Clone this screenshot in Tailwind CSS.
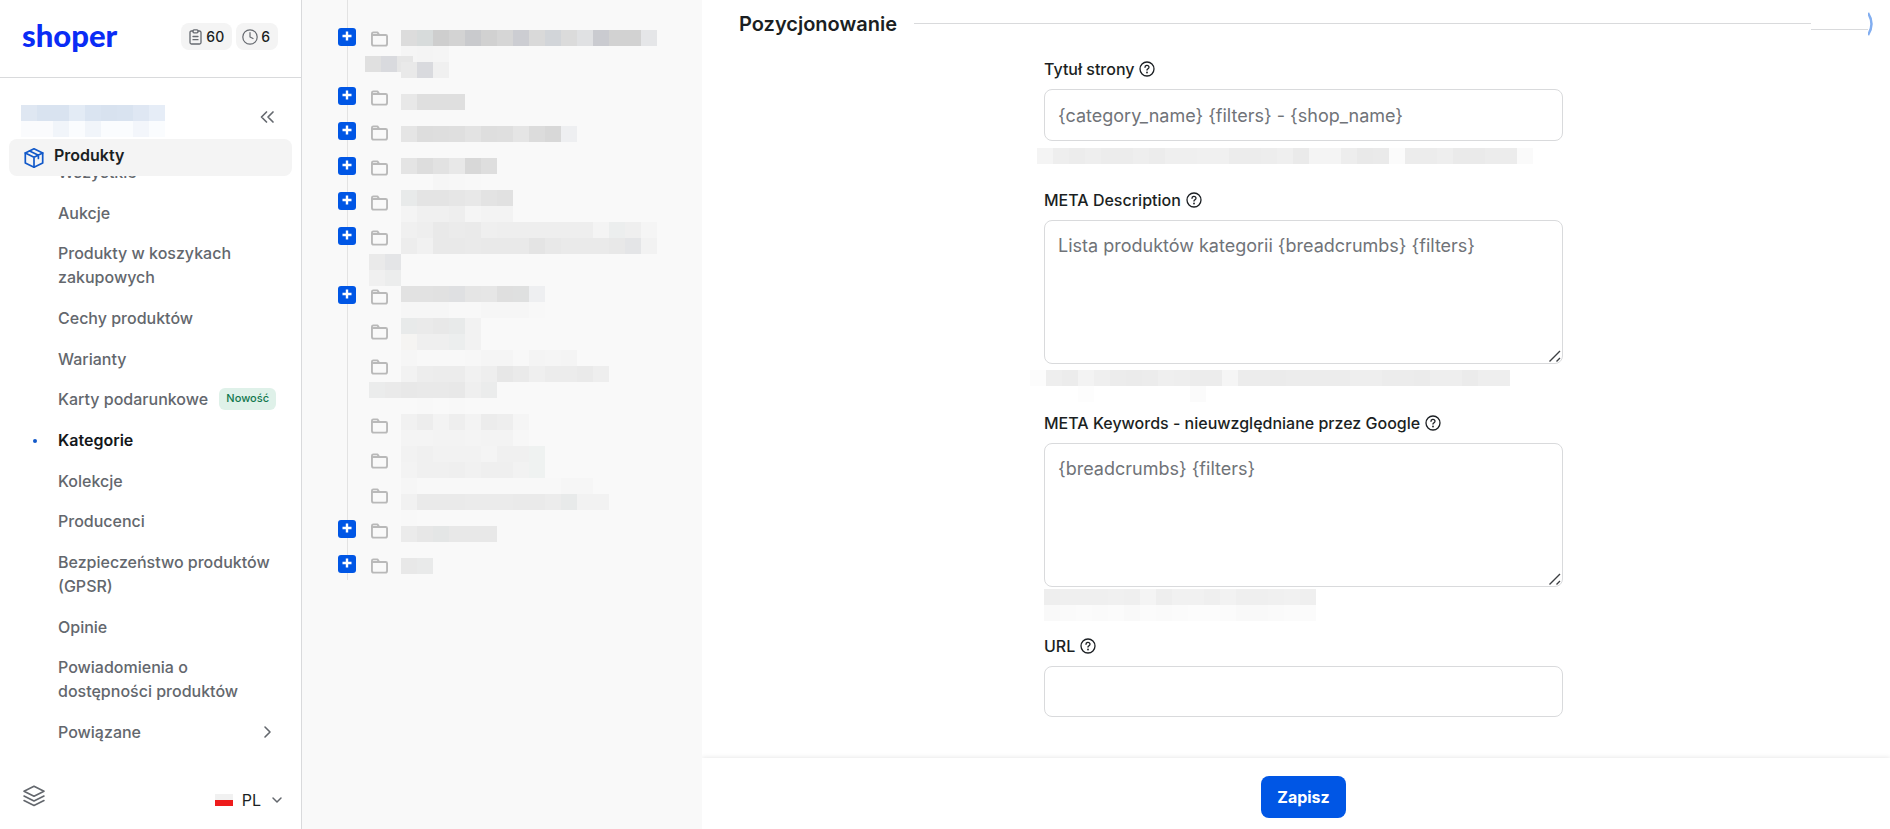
<!DOCTYPE html>
<html lang="pl">

<head>
    <meta charset="UTF-8">
    <meta name="viewport" content="width=device-width, initial-scale=1.0">
    <title>Kategorie | Shoper</title>
    <script src="https://cdn.jsdelivr.net/npm/@tailwindcss/browser@4"></script>
</head>

<body class="bg-white font-['Inter',sans-serif] text-[#1b1f23]">

    <div class="flex h-screen overflow-hidden">

        <!-- Sidebar -->
        <aside class="w-[302px] shrink-0 flex flex-col border-r border-[#d9dadc] bg-white">
            <header class="h-[78px] shrink-0 flex items-center justify-between pl-[22px] pr-[23px] pb-4 pt-2 border-b border-[#d9dadc]">
                <a href="#" class="font-['Lato',sans-serif] font-black text-[31px] leading-8 text-[#0a2cf5]">shoper</a>
                <div class="flex gap-1 mt-1">
                    <a href="#" class="flex items-center gap-1 h-[27px] px-2 rounded-lg bg-[#f4f4f4] text-sm font-medium">
                        <svg class="w-[13px] h-4 text-[#666a70]" viewBox="0 0 13 16" fill="none" stroke="currentColor" stroke-width="1.3" stroke-linecap="round" stroke-linejoin="round"><path d="M4 2H2.700A1.500 1.500 0 0 0 1 3.500v10A1.500 1.500 0 0 0 2.500 15h8a1.500 1.500 0 0 0 1.500-1.500v-10A1.500 1.500 0 0 0 10.500 2H9" /><rect x="4" y=".8" width="5" height="3" rx="1" /><path d="M4 7.500h5M4 10.700h5" /></svg>
                        60
                    </a>
                    <a href="#" class="flex items-center gap-[3px] h-[27px] pl-[6px] pr-2 rounded-lg bg-[#f4f4f4] text-sm font-medium">
                        <svg class="w-4 h-4 text-[#666a70]" viewBox="0 0 16 16" fill="none" stroke="currentColor" stroke-width="1.2" stroke-linecap="round" stroke-linejoin="round"><circle cx="8" cy="8" r="7.200" /><path d="M8 3.500V8l3 1.500" /></svg>
                        6
                    </a>
                </div>
            </header>

            <div class="h-[61px] shrink-0 flex items-start justify-between pl-[21px] pr-[26px] pt-[27px]">
                <div data-mosaic="shop"></div>
                <button type="button" aria-label="Zwiń menu" class="mt-1 text-[#666a70]">
                    <svg class="w-4 h-4" viewBox="0 0 16 16" fill="none" stroke="currentColor" stroke-width="1.7" stroke-linecap="round" stroke-linejoin="round"><path d="M7.500 3 2.500 8l5 5M14 3 9 8l5 5" /></svg>
                </button>
            </div>

            <a href="#" class="shrink-0 h-[37px] mx-[9px] px-[15px] flex items-center gap-[10px] rounded-lg bg-[#f4f4f4] text-base leading-none font-semibold">
                <svg class="w-5 h-5 text-[#1259c9]" viewBox="0 0 20 20" fill="none" stroke="currentColor" stroke-width="1.700" stroke-linecap="round" stroke-linejoin="round"><path d="M10 .8 18.700 5v10L10 19.200 1.300 15V5z" /><path d="M1.300 5 10 9.300 18.700 5M10 9.300v9.900M5.600 2.900l8.800 4.300v3.300" /></svg>
                <span class="pb-[5px]">Produkty</span>
            </a>

            <!-- The list is scrolled a little, its first item is cut by the header above -->
            <nav class="flex-1 min-h-0 overflow-hidden text-base leading-6 font-medium text-[#63676d]">
                <ul class="h-[calc(100%+16px)] -mt-4 pl-[58px] pr-[25px] flex flex-col justify-between">
                    <li><a href="#">Wszystkie</a></li>
                    <li><a href="#">Aukcje</a></li>
                    <li><a href="#">Produkty w koszykach zakupowych</a></li>
                    <li><a href="#">Cechy produktów</a></li>
                    <li><a href="#">Warianty</a></li>
                    <li class="flex items-center justify-between">
                        <a href="#">Karty podarunkowe</a>
                        <span class="h-[22px] px-[7px] rounded-md bg-[#dff1e9] text-[11px] leading-5 text-[#12784e]">Nowość</span>
                    </li>
                    <li class="relative font-semibold text-[#14171a]">
                        <span class="absolute -left-[25px] top-[11px] w-1 h-1 rounded-full bg-[#1259c9]"></span>
                        <a href="#">Kategorie</a>
                    </li>
                    <li><a href="#">Kolekcje</a></li>
                    <li><a href="#">Producenci</a></li>
                    <li><a href="#">Bezpieczeństwo produktów (GPSR)</a></li>
                    <li><a href="#">Opinie</a></li>
                    <li><a href="#">Powiadomienia o dostępności produktów</a></li>
                    <li>
                        <a href="#" class="flex items-center justify-between">Powiązane
                            <svg class="w-[18px] h-[18px]" viewBox="0 0 18 18" fill="none" stroke="currentColor" stroke-width="1.600" stroke-linecap="round" stroke-linejoin="round"><path d="m7 4 5 5-5 5" /></svg>
                        </a>
                    </li>
                </ul>
            </nav>

            <footer class="shrink-0 h-[85px] pt-[26px] pl-[23px] pr-[17px] flex items-center justify-between">
                <button type="button" aria-label="Widoki" class="mb-2 text-[#63676d]">
                    <svg class="w-[22px] h-[22px]" viewBox="0 0 22 22" fill="none" stroke="currentColor" stroke-width="1.600" stroke-linecap="round" stroke-linejoin="round"><path d="m11 1.200 10 5-10 5-10-5z" /><path d="m1 11 10 5 10-5M1 15.500l10 5 10-5" /></svg>
                </button>
                <button type="button" class="flex items-center gap-[9px] text-base">
                    <svg class="w-[18px] h-3" viewBox="0 0 18 12"><path fill="#f1f1f1" d="M0 0h18v6H0z" /><path fill="#ee1c1c" d="M0 6h18v6H0z" /></svg>
                    PL
                    <svg class="w-[14px] h-[14px] text-[#63676d]" viewBox="0 0 14 14" fill="none" stroke="currentColor" stroke-width="1.500" stroke-linecap="round" stroke-linejoin="round"><path d="m3 5 4 4 4-4" /></svg>
                </button>
            </footer>
        </aside>

        <!-- Category tree -->
        <section class="relative w-[400px] shrink-0 bg-[#f9f9f9]">
            <div class="absolute left-[45px] top-0 w-px h-[580px] bg-[#e3e3e3]"></div>
            <ul id="tree" class="relative pt-7 pl-9"></ul>
            <div class="absolute left-[67px] top-[30px]" data-mosaic="tree"></div>
            <div class="absolute left-[63px] top-[56px]" data-mosaic="treeWrap"></div>
            <div class="absolute left-[99px] top-[62px]" data-mosaic="treeWrapEnd"></div>
        </section>

        <!-- Category form -->
        <main class="flex-1 min-w-0 flex flex-col bg-white shadow-[0_0_5px_rgba(0,0,0,0.08)]">
            <form id="seo-form" class="flex-1 min-h-0 overflow-hidden pl-[37px]" onsubmit="event.preventDefault()">
                <div class="h-12 flex items-center">
                    <h2 class="text-xl font-semibold">Pozycjonowanie</h2>
                    <div class="flex-1 ml-[17px] mb-px h-px bg-[#d9dadc]"></div>
                    <div class="w-[57px] mt-[11px] h-px bg-[#d9dadc]"></div>
                    <svg class="w-[22px] h-6" viewBox="0 0 22 24" fill="none" stroke="#82aef0" stroke-width="2.500"><path d="M0 1Q7 12 0 23" /></svg>
                </div>

                <div class="pt-[9px] pr-[22px]">
                    <div class="w-[519px] mx-auto">
                        <label for="title" class="flex items-center gap-[5px] h-6 mb-2 text-base font-medium">Tytuł strony
                            <svg class="w-4 h-4" viewBox="0 0 16 16"><use href="#help" /></svg>
                        </label>
                        <input type="text" id="title" placeholder="{category_name} {filters} - {shop_name}" class="block w-full h-[52px] px-[13px] text-lg border border-[#d9dadc] rounded-lg placeholder:text-[#707378]">
                        <div class="h-[47px] pt-[7px] -ml-[7px]" data-mosaic="titleHelp"></div>

                        <label for="description" class="flex items-center gap-[5px] h-6 mb-2 text-base font-medium">META Description
                            <svg class="w-4 h-4" viewBox="0 0 16 16"><use href="#help" /></svg>
                        </label>
                        <div class="relative">
                            <textarea id="description" placeholder="Lista produktów kategorii {breadcrumbs} {filters}" class="block w-full h-[144px] px-[13px] py-[13px] text-lg leading-6 resize-none border border-[#d9dadc] rounded-lg placeholder:text-[#707378]"></textarea>
                            <svg class="absolute right-[2px] bottom-[2px] w-3 h-3" viewBox="0 0 12 12"><use href="#grip" /></svg>
                        </div>
                        <div class="h-[47px] pt-[6px] -ml-[14px]" data-mosaic="descriptionHelp"></div>

                        <label for="keywords" class="flex items-center gap-[5px] h-6 mb-2 text-base font-medium">META Keywords - nieuwzględniane przez Google
                            <svg class="w-4 h-4" viewBox="0 0 16 16"><use href="#help" /></svg>
                        </label>
                        <div class="relative">
                            <textarea id="keywords" placeholder="{breadcrumbs} {filters}" class="block w-full h-[144px] px-[13px] py-[13px] text-lg leading-6 resize-none border border-[#d9dadc] rounded-lg placeholder:text-[#707378]"></textarea>
                            <svg class="absolute right-[2px] bottom-[2px] w-3 h-3" viewBox="0 0 12 12"><use href="#grip" /></svg>
                        </div>
                        <div class="h-[47px] pt-[2px]" data-mosaic="keywordsHelp"></div>

                        <label for="url" class="flex items-center gap-[5px] h-6 mb-2 text-base font-medium">URL
                            <svg class="w-4 h-4" viewBox="0 0 16 16"><use href="#help" /></svg>
                        </label>
                        <input type="text" id="url" class="block w-full h-[51px] px-[13px] text-lg border border-[#d9dadc] rounded-lg">
                    </div>
                </div>
            </form>

            <div class="shrink-0 h-[71px] pl-[15px] pt-[6px] flex items-center justify-center bg-white shadow-[0_0_5px_rgba(0,0,0,0.12)]">
                <button type="submit" form="seo-form" class="h-[42px] px-4 rounded-lg bg-[#0056e5] text-base font-bold text-white">Zapisz</button>
            </div>
        </main>
    </div>

    <!-- Shared icons -->
    <svg class="hidden">
        <symbol id="help" viewBox="0 0 16 16">
            <g fill="none" stroke="#1b1f23" stroke-width="1.300" stroke-linecap="round" stroke-linejoin="round"><circle cx="8" cy="8" r="7" /><path d="M6 6.300a2 1.900 0 1 1 2.900 1.600c-.6.300-.9.600-.9 1.200" /></g>
            <circle cx="8" cy="11.500" r=".9" fill="#1b1f23" />
        </symbol>
        <symbol id="folder" viewBox="0 0 18 16">
            <path d="M1 12.500V2.500A1.500 1.500 0 0 1 2.500 1h4.300L8.800 3.700h6.700A1.500 1.500 0 0 1 17 5.200V13a2 2 0 0 1-2 2H3a2 2 0 0 1-2-2V5.500A1.800 1.800 0 0 1 2.800 3.700H9" fill="none" stroke="#b9b9b9" stroke-width="2" stroke-linejoin="round" />
        </symbol>
        <symbol id="grip" viewBox="0 0 12 12">
            <path d="M.5 11.500 11 1M7.500 11.500 11 8" fill="none" stroke="#3c3f42" stroke-width="1.400" />
        </symbol>
    </svg>

    <script>
        // Tree rows: tall = name wraps to a second line, open = has children to expand
        const rows = [
            { tall: true, open: true },
            { open: true },
            { open: true },
            { open: true },
            { open: true },
            { tall: true, open: true },
            { open: true },
            {},
            { tall: true },
            {},
            {},
            {},
            { open: true },
            { open: true },
        ];

        document.getElementById('tree').innerHTML = rows.map(row => `
            <li class="${row.tall ? 'h-[59px]' : 'h-[35px]'} flex items-start gap-[15px]">
                ${row.open
                    ? `<button type="button" aria-label="Rozwiń" class="w-[18px] h-[18px] grid place-items-center pb-[2px] rounded-[3px] bg-[#0056e5]">
                        <svg class="w-[10px] h-[10px]" viewBox="0 0 10 10"><path d="M5 .5v9M.5 5h9" stroke="#fff" stroke-width="2.400" /></svg>
                    </button>`
                    : '<span class="w-[18px] h-[18px]"></span>'}
                <svg class="w-[17px] h-4 mt-[3px]"><use href="#folder" /></svg>
            </li>`).join('');

        // Masked texts, one colour per 16px cell; two digits stand for a grey level
        const mosaics = {
            shop: [
                'dfe7f2 d9e3f0 d9e3f0 e3ebf5 dae4f1 d8e2ef d9e3f0 dfe7f3 e6edf7',
                'fafbfd fafbfd f1f5fa fafcfe f1f5fa fafcfe fafcfe f3f6fb fafcfe',
            ],
            tree: [
                '.. .. dc d7dbdb ce d3 c9cacd d1 d6 cccdd2 d9 d2d5d9 db e0e1e3 cacbd0 d2 d2 e5e6e8',
                '.. .. f5 f4 f5 f9 f9',
                '', '',
                '.. .. e8 df df df',
                '',
                '.. .. e5 dd de df e3 de df e5 dc d8 eeeff1',
                '',
                '.. .. e4 dd e2 e8 d8 de',
                '.. .. f9 f9 f6 f7 f8 f9',
                '.. .. e8eaea e4 e4 e6 e8 e3 e1',
                '.. .. f4 f0 f0 ee f5 f3 f3',
                '.. .. f0 ee e9 eb ea ef ee ee ee ee ee ee f4 eceeee ef f5',
                '.. .. ed f1 e9 e9 ea e9 e9 e9 e4 e8 ea ea ea e8 e4e5e7 f2',
                'ea e4e5e7',
                'f0 eceded',
                '.. .. e2 e2 e1 dfe0e2 e5 e6 df dfe0e0 eeeff1',
                '.. .. f6 f6 f6 f8 f8 f6 f6 f6 f8',
                '.. .. e8eaea ea e8 e8eaea f2',
                '.. .. f5f4f2 ef ef eceeee f2',
                '.. .. f6 f8 f8 f8 f7 f5 f5 f8 f4 f5 f4',
                '.. .. f2 ed ec ec f1 ee e7 ea ef ec ec ea ee',
                'ebecec ea e8 e9 e9 e8 ef ebecec',
                '.. .. f9 f8 f9 f8',
                '.. .. f1 ed f3 ee f3 ec ee f5',
                '.. .. f4 f4 f3 f3 f4 f3 f3 f7',
                '.. .. f2 f0 f2 f2 f2 f4 f0 f0 eff2f1',
                '.. .. f3 f0 f0 ef f1 ef ef f2 eff2f1',
                '.. .. f6 f8 f8 f8 f8 f8 f8 f8 f8 f8 f6 f6',
                '.. .. f1 ea ea ea eb eb eb ea ea ec e8eaea f2 f2',
                '.. .. f8 f9',
                '.. .. eb e7 e4e6e6 e8 e8 e8',
                '',
                '.. .. e8 e9eaea',
            ],
            treeWrap: ['e0 d9dade e6'],
            treeWrapEnd: ['e9 d9dade f0'],
            titleHelp: ['f4 ee ec ee ec ec ee ec ef ef f0 f0 ec ec ed ef ea f4 f4 ed e9 ea fb ec ec ee ea ea ec ec fa'],
            descriptionHelp: [
                'fc ee ec f3 ef ec eb ec ef ee ec ec f5 ec ec eb ec ec ec ec ee ee ec ec eb ee ee eb ee ee',
                'ff ff ff fd ff ff ff ff ff ff fb',
            ],
            keywordsHelp: [
                'ee ef ef ef f0 ef f4 ee f1 f1 ef f2 ef ef f0 f1 ef',
                'f9 fa fb fa fb f9 fb fa fb fc fc fb f9 f9 fa fb fb',
            ],
        };

        document.querySelectorAll('[data-mosaic]').forEach(el => {
            el.innerHTML = mosaics[el.dataset.mosaic].map(line => {
                const cells = line.split(' ').map(c => {
                    const color = !c || c === '..' ? 'transparent' : '#' + (c.length === 2 ? c + c + c : c);
                    return `<span class="w-4 h-4" style="background:${color}"></span>`;
                }).join('');
                return `<div class="flex h-4">${cells}</div>`;
            }).join('');
        });
    </script>

</body>

</html>
